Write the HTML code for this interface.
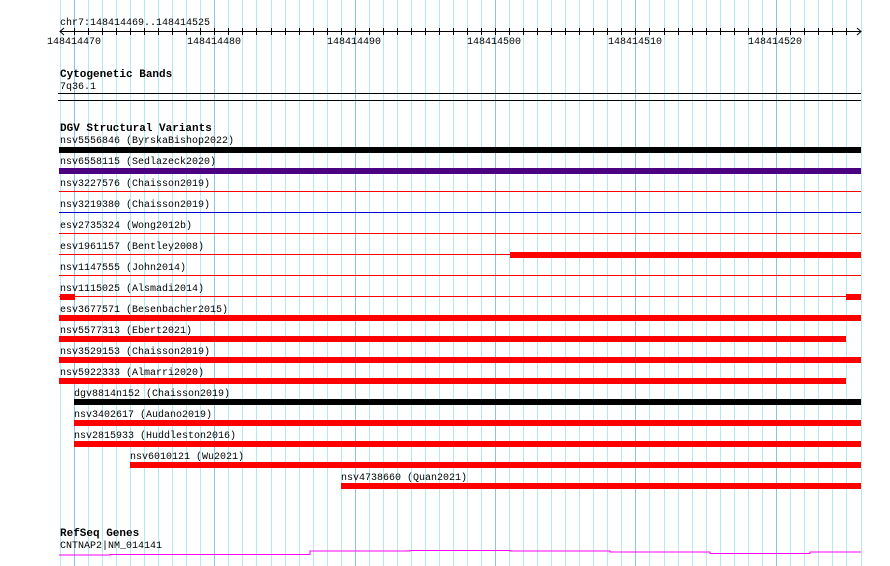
<!DOCTYPE html>
<html><head><meta charset="utf-8"><style>
html,body{margin:0;padding:0;background:#fff;width:890px;height:566px;overflow:hidden}
svg text{font-family:"Liberation Mono","DejaVu Sans Mono",monospace;font-size:10px;fill:#000}
svg text.b{font-weight:bold;font-size:11px}
</style></head><body>
<svg width="890" height="566" xmlns="http://www.w3.org/2000/svg">
<path stroke="#b4e8f2" stroke-width="1" fill="none" d="M60.5 0V566M88.5 0V566M102.5 0V566M116.5 0V566M130.5 0V566M144.5 0V566M158.5 0V566M172.5 0V566M186.5 0V566M200.5 0V566M228.5 0V566M242.5 0V566M256.5 0V566M271.5 0V566M285.5 0V566M299.5 0V566M313.5 0V566M327.5 0V566M341.5 0V566M369.5 0V566M383.5 0V566M397.5 0V566M411.5 0V566M425.5 0V566M439.5 0V566M453.5 0V566M467.5 0V566M481.5 0V566M509.5 0V566M523.5 0V566M537.5 0V566M551.5 0V566M565.5 0V566M579.5 0V566M593.5 0V566M607.5 0V566M621.5 0V566M649.5 0V566M664.5 0V566M678.5 0V566M692.5 0V566M706.5 0V566M720.5 0V566M734.5 0V566M748.5 0V566M762.5 0V566M790.5 0V566M804.5 0V566M818.5 0V566M832.5 0V566M846.5 0V566M861.5 0V566"/>
<path stroke="#88c4ea" stroke-width="1" fill="none" d="M74.5 0V566M214.5 0V566M355.5 0V566M495.5 0V566M635.5 0V566M776.5 0V566"/>
<path stroke="#000" stroke-width="1" fill="none" d="M74.5 28v7M88.5 28v7M102.5 28v7M116.5 28v7M130.5 28v7M144.5 28v7M158.5 28v7M172.5 28v7M186.5 28v7M200.5 28v7M214.5 28v7M228.5 28v7M242.5 28v7M256.5 28v7M271.5 28v7M285.5 28v7M299.5 28v7M313.5 28v7M327.5 28v7M341.5 28v7M355.5 28v7M369.5 28v7M383.5 28v7M397.5 28v7M411.5 28v7M425.5 28v7M439.5 28v7M453.5 28v7M467.5 28v7M481.5 28v7M495.5 28v7M509.5 28v7M523.5 28v7M537.5 28v7M551.5 28v7M565.5 28v7M579.5 28v7M593.5 28v7M607.5 28v7M621.5 28v7M635.5 28v7M649.5 28v7M664.5 28v7M678.5 28v7M692.5 28v7M706.5 28v7M720.5 28v7M734.5 28v7M748.5 28v7M762.5 28v7M776.5 28v7M790.5 28v7M804.5 28v7M818.5 28v7M832.5 28v7M846.5 28v7"/>
<line x1="60" y1="31.5" x2="861" y2="31.5" stroke="#000"/>
<polyline points="64,28 60,31.5 64,35" fill="none" stroke="#000"/>
<polyline points="857,28 861,31.5 857,35" fill="none" stroke="#000"/>
<text x="60" y="25">chr7:148414469..148414525</text>
<text x="47" y="44">148414470</text>
<text x="187" y="44">148414480</text>
<text x="327" y="44">148414490</text>
<text x="467" y="44">148414500</text>
<text x="608" y="44">148414510</text>
<text x="748" y="44">148414520</text>

<text class="b" x="60" y="77">Cytogenetic Bands</text>
<text x="60" y="89">7q36.1</text>
<rect x="58" y="93" width="803" height="1" fill="#000"/>
<rect x="58" y="100" width="803" height="1" fill="#000"/>

<text class="b" x="60" y="131">DGV Structural Variants</text>
<text x="60" y="143">nsv5556846 (ByrskaBishop2022)</text>
<rect x="59" y="147" width="802" height="6" fill="#000"/>
<text x="60" y="164">nsv6558115 (Sedlazeck2020)</text>
<rect x="59" y="168" width="802" height="6" fill="#4b0082"/>
<text x="60" y="186">nsv3227576 (Chaisson2019)</text>
<rect x="59" y="191" width="802" height="1" fill="#f00"/>
<text x="60" y="207">nsv3219380 (Chaisson2019)</text>
<rect x="59" y="212" width="802" height="1" fill="#00c"/>
<text x="60" y="228">esv2735324 (Wong2012b)</text>
<rect x="59" y="233" width="802" height="1" fill="#f00"/>
<text x="60" y="249">esv1961157 (Bentley2008)</text>
<rect x="59" y="254" width="451" height="1" fill="#f00"/>
<rect x="510" y="252" width="351" height="6" fill="#f00"/>
<text x="60" y="270">nsv1147555 (John2014)</text>
<rect x="59" y="275" width="802" height="1" fill="#f00"/>
<text x="60" y="291">nsv1115025 (Alsmadi2014)</text>
<rect x="59" y="296" width="802" height="1" fill="#f00"/>
<rect x="60" y="294" width="15" height="6" fill="#f00"/>
<rect x="846" y="294" width="15" height="6" fill="#f00"/>
<text x="60" y="312">esv3677571 (Besenbacher2015)</text>
<rect x="59" y="315" width="802" height="6" fill="#f00"/>
<text x="60" y="333">nsv5577313 (Ebert2021)</text>
<rect x="59" y="336" width="787" height="6" fill="#f00"/>
<text x="60" y="354">nsv3529153 (Chaisson2019)</text>
<rect x="59" y="357" width="802" height="6" fill="#f00"/>
<text x="60" y="375">nsv5922333 (Almarri2020)</text>
<rect x="59" y="378" width="787" height="6" fill="#f00"/>
<text x="74" y="396">dgv8814n152 (Chaisson2019)</text>
<rect x="74" y="399" width="787" height="6" fill="#000"/>
<text x="74" y="417">nsv3402617 (Audano2019)</text>
<rect x="74" y="420" width="787" height="6" fill="#f00"/>
<text x="74" y="438">nsv2815933 (Huddleston2016)</text>
<rect x="74" y="441" width="787" height="6" fill="#f00"/>
<text x="130" y="459">nsv6010121 (Wu2021)</text>
<rect x="130" y="462" width="731" height="6" fill="#f00"/>
<text x="341" y="480">nsv4738660 (Quan2021)</text>
<rect x="341" y="483" width="520" height="6" fill="#f00"/>

<text class="b" x="60" y="536">RefSeq Genes</text>
<text x="60" y="548">CNTNAP2|NM_014141</text>
<polyline points="59,555 110,555 110,554.5 310,554.5 310,551 410,551 410,550.5 510,550.5 510,551 610,551 610,552 710,552 710,553.5 810,553.5 810,552 861,552" fill="none" stroke="#f0f" stroke-width="1"/>
</svg>
</body></html>
